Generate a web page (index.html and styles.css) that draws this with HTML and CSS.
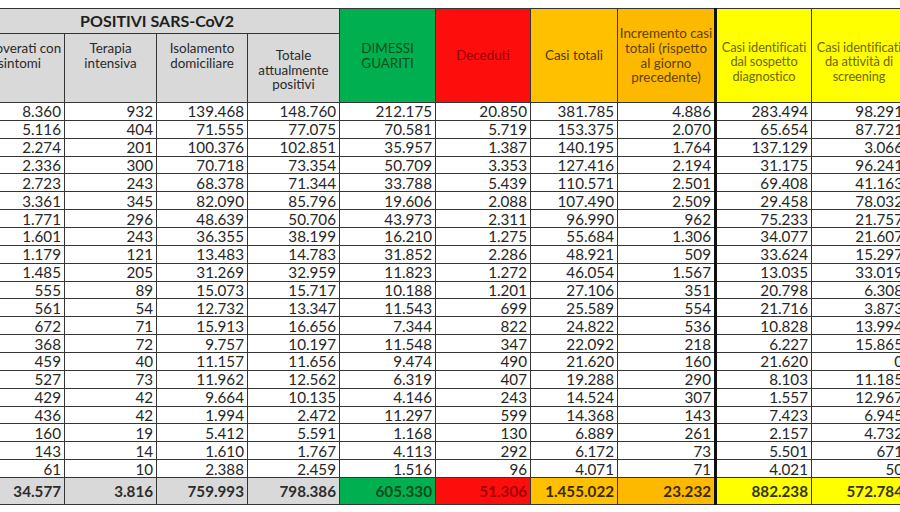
FILE: index.html
```html
<!DOCTYPE html>
<html lang="it">
<head>
<meta charset="utf-8">
<title>Tabella COVID-19</title>
<link rel="stylesheet" href="styles.css">
</head>
<body>
<div class="page">
<table class="tab">
  <colgroup>
    <col class="c1"><col class="c2"><col class="c3"><col class="c4"><col class="c5">
    <col class="c6"><col class="c7"><col class="c8"><col class="c9"><col class="c10">
  </colgroup>
  <thead>
    <tr class="h1">
      <th colspan="4" class="grey title">POSITIVI SARS-CoV2</th>
      <th rowspan="2" class="green">DIMESSI<br>GUARITI</th>
      <th rowspan="2" class="red">Deceduti</th>
      <th rowspan="2" class="orange">Casi totali</th>
      <th rowspan="2" class="orange2">Incremento casi<br>totali (rispetto<br>al giorno<br>precedente)</th>
      <th rowspan="2" class="yellow thick">Casi identificati<br>dal sospetto<br>diagnostico</th>
      <th rowspan="2" class="yellow">Casi identificati<br>da attività di<br>screening</th>
    </tr>
    <tr class="h2">
      <th class="grey two">Ricoverati con<br>sintomi</th>
      <th class="grey two">Terapia<br>intensiva</th>
      <th class="grey two">Isolamento<br>domiciliare</th>
      <th class="grey three">Totale<br>attualmente<br>positivi</th>
    </tr>
  </thead>
  <tbody>
    <tr><td>8.360</td><td>932</td><td>139.468</td><td>148.760</td><td>212.175</td><td>20.850</td><td>381.785</td><td>4.886</td><td class="thick">283.494</td><td>98.291</td></tr>
    <tr><td>5.116</td><td>404</td><td>71.555</td><td>77.075</td><td>70.581</td><td>5.719</td><td>153.375</td><td>2.070</td><td class="thick">65.654</td><td>87.721</td></tr>
    <tr><td>2.274</td><td>201</td><td>100.376</td><td>102.851</td><td>35.957</td><td>1.387</td><td>140.195</td><td>1.764</td><td class="thick">137.129</td><td>3.066</td></tr>
    <tr><td>2.336</td><td>300</td><td>70.718</td><td>73.354</td><td>50.709</td><td>3.353</td><td>127.416</td><td>2.194</td><td class="thick">31.175</td><td>96.241</td></tr>
    <tr><td>2.723</td><td>243</td><td>68.378</td><td>71.344</td><td>33.788</td><td>5.439</td><td>110.571</td><td>2.501</td><td class="thick">69.408</td><td>41.163</td></tr>
    <tr><td>3.361</td><td>345</td><td>82.090</td><td>85.796</td><td>19.606</td><td>2.088</td><td>107.490</td><td>2.509</td><td class="thick">29.458</td><td>78.032</td></tr>
    <tr><td>1.771</td><td>296</td><td>48.639</td><td>50.706</td><td>43.973</td><td>2.311</td><td>96.990</td><td>962</td><td class="thick">75.233</td><td>21.757</td></tr>
    <tr><td>1.601</td><td>243</td><td>36.355</td><td>38.199</td><td>16.210</td><td>1.275</td><td>55.684</td><td>1.306</td><td class="thick">34.077</td><td>21.607</td></tr>
    <tr><td>1.179</td><td>121</td><td>13.483</td><td>14.783</td><td>31.852</td><td>2.286</td><td>48.921</td><td>509</td><td class="thick">33.624</td><td>15.297</td></tr>
    <tr><td>1.485</td><td>205</td><td>31.269</td><td>32.959</td><td>11.823</td><td>1.272</td><td>46.054</td><td>1.567</td><td class="thick">13.035</td><td>33.019</td></tr>
    <tr><td>555</td><td>89</td><td>15.073</td><td>15.717</td><td>10.188</td><td>1.201</td><td>27.106</td><td>351</td><td class="thick">20.798</td><td>6.308</td></tr>
    <tr><td>561</td><td>54</td><td>12.732</td><td>13.347</td><td>11.543</td><td>699</td><td>25.589</td><td>554</td><td class="thick">21.716</td><td>3.873</td></tr>
    <tr><td>672</td><td>71</td><td>15.913</td><td>16.656</td><td>7.344</td><td>822</td><td>24.822</td><td>536</td><td class="thick">10.828</td><td>13.994</td></tr>
    <tr><td>368</td><td>72</td><td>9.757</td><td>10.197</td><td>11.548</td><td>347</td><td>22.092</td><td>218</td><td class="thick">6.227</td><td>15.865</td></tr>
    <tr><td>459</td><td>40</td><td>11.157</td><td>11.656</td><td>9.474</td><td>490</td><td>21.620</td><td>160</td><td class="thick">21.620</td><td>0</td></tr>
    <tr><td>527</td><td>73</td><td>11.962</td><td>12.562</td><td>6.319</td><td>407</td><td>19.288</td><td>290</td><td class="thick">8.103</td><td>11.185</td></tr>
    <tr><td>429</td><td>42</td><td>9.664</td><td>10.135</td><td>4.146</td><td>243</td><td>14.524</td><td>307</td><td class="thick">1.557</td><td>12.967</td></tr>
    <tr><td>436</td><td>42</td><td>1.994</td><td>2.472</td><td>11.297</td><td>599</td><td>14.368</td><td>143</td><td class="thick">7.423</td><td>6.945</td></tr>
    <tr><td>160</td><td>19</td><td>5.412</td><td>5.591</td><td>1.168</td><td>130</td><td>6.889</td><td>261</td><td class="thick">2.157</td><td>4.732</td></tr>
    <tr><td>143</td><td>14</td><td>1.610</td><td>1.767</td><td>4.113</td><td>292</td><td>6.172</td><td>73</td><td class="thick">5.501</td><td>671</td></tr>
    <tr><td>61</td><td>10</td><td>2.388</td><td>2.459</td><td>1.516</td><td>96</td><td>4.071</td><td>71</td><td class="thick">4.021</td><td>50</td></tr>
  </tbody>
  <tfoot>
    <tr class="tot">
      <td class="grey">34.577</td><td class="grey">3.816</td><td class="grey">759.993</td><td class="grey">798.386</td>
      <td class="green">605.330</td><td class="red">51.306</td><td class="orange">1.455.022</td><td class="orange2">23.232</td>
      <td class="yellow thick">882.238</td><td class="yellow">572.784</td>
    </tr>
  </tfoot>
</table>
</div>
</body>
</html>
```
FILE: styles.css
```css
html, body {
  margin: 0;
  padding: 0;
  background: #ffffff;
  overflow: hidden;
}
.page {
  width: 900px;
  height: 512px;
  padding-top: 8px;
  box-sizing: border-box;
  overflow: hidden;
}
.tab {
  margin-left: -26px;
  border-collapse: collapse;
  table-layout: fixed;
  width: 932px;
  font-family: Lato, "Liberation Sans", sans-serif;
  color: #262626;
}
.c1 { width: 90px; }
.c2 { width: 92px; }
.c3 { width: 91px; }
.c4 { width: 92px; }
.c5 { width: 96px; }
.c6 { width: 95px; }
.c7 { width: 87px; }
.c8 { width: 98px; }
.c9 { width: 96px; }
.c10 { width: 95px; }

.tab th, .tab td {
  border: 1px solid #353535;
  padding: 0;
}
.tab th {
  font-weight: normal;
  font-size: 13.4px;
  line-height: 14.6px;
  text-align: center;
  vertical-align: middle;
  white-space: nowrap;
  overflow: hidden;
  color: #2a2a2a;
}
.h1 { height: 25px; }
.h2 { height: 69px; }
.tab th.title {
  font-weight: bold;
  font-size: 16px;
  color: #1e1e1e;
}
.tab th.two { padding-bottom: 24px; }
.tab th.three { padding-top: 4px; }

.tab td {
  height: 16.86px;
  font-size: 15.2px;
  line-height: 16px;
  text-align: right;
  padding-right: 3px;
  white-space: nowrap;
  overflow: hidden;
}
.tab .thick { border-left: 3px solid #111; }

.grey { background: #d9d9d9; }
.green { background: #00b050; }
.red { background: #fe0d0d; }
.orange { background: #ffc000; }
.orange2 { background: #fdb900; }
.yellow { background: #ffff00; }

.tab th.green { color: #0a4d1d; }
.tab th.red { color: #940000; }
.tab th.orange { color: #553800; }
.tab th.orange2 { color: #5e3f00; }
.tab th.yellow {
  color: #6f6800;
  font-size: 12.8px;
  letter-spacing: -0.1px;
  padding-top: 12px;
}

.tot td {
  height: 26px;
  font-weight: bold;
  font-size: 15.2px;
  color: #2c2c2c;
}
.tot td.green { color: #0b4a1c; }
.tot td.red { color: #a00000; }
.tot td.orange, .tot td.orange2 { color: #3a2900; }
.tot td.yellow { color: #34341a; }
```
